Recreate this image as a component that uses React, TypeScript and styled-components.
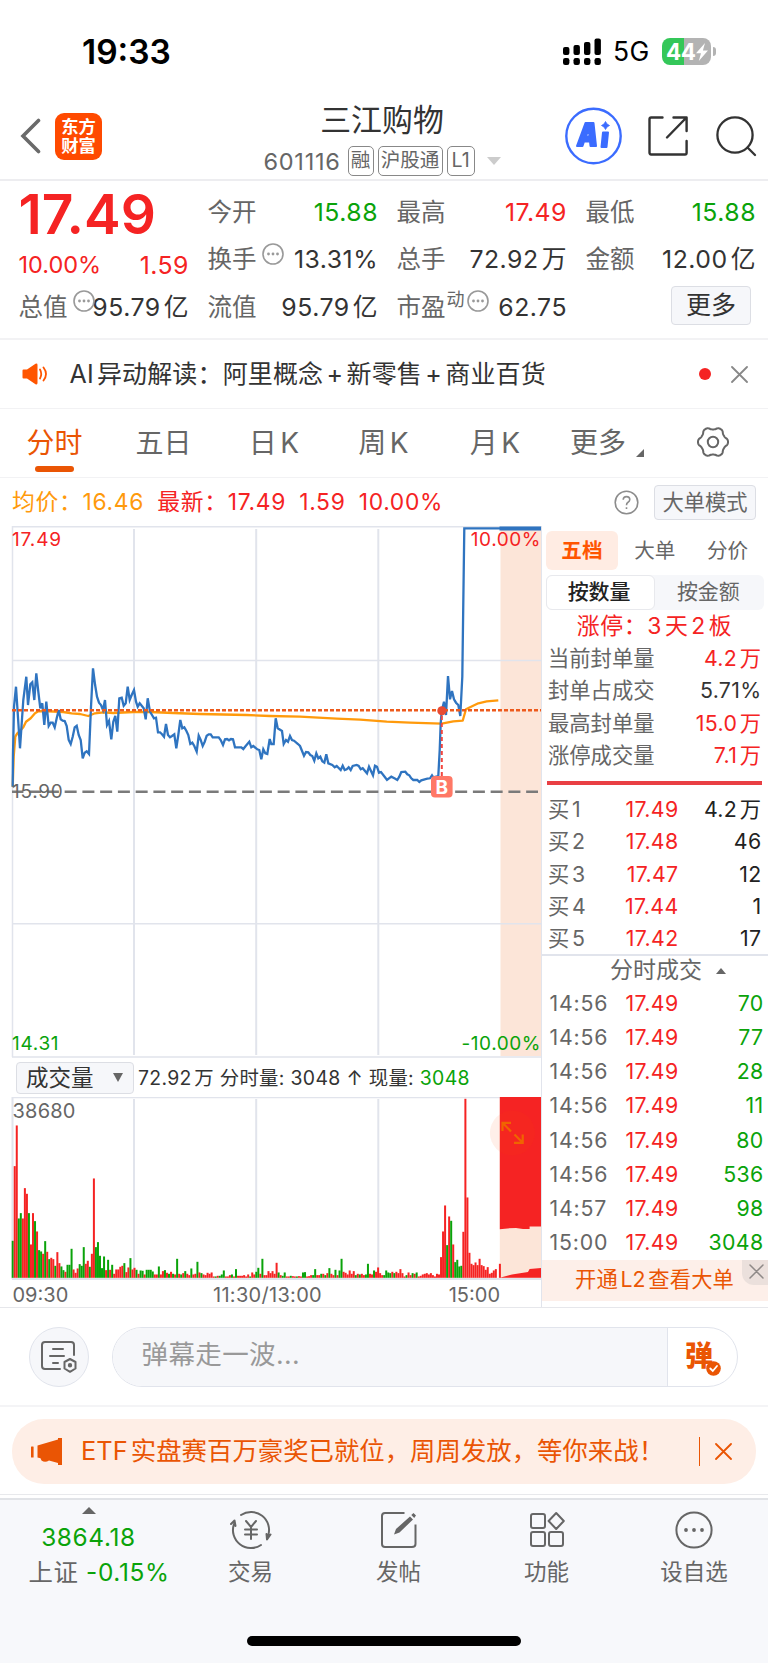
import React from 'react';
import styled, { createGlobalStyle } from 'styled-components';

const RED = '#f52323';
const GREEN = '#0aa30a';
const ORANGE = '#ea5504';
const GREY = '#666';
const DARK = '#333';
const LINE = '#e1e4ec';

const Global = createGlobalStyle`
  *, *::before, *::after { box-sizing: border-box; }
  body {
    margin: 0;
    background: #fff;
    color: ${DARK};
    font-family: Inter, 'Noto Sans CJK SC', sans-serif;
    font-weight: 400;
    text-autospace: normal;
  }
  svg { display: block; flex: none; }
`;

const Screen = styled.div`
  width: 768px;
  height: 1663px;
  display: flex;
  flex-direction: column;
  overflow: hidden;
  background: #fff;
`;

const Text = styled.span<{ $s: number; $c?: string; $w?: number; $ls?: number }>`
  font-size: ${p => p.$s}px;
  line-height: 1.2;
  color: ${p => p.$c || 'inherit'};
  font-weight: ${p => p.$w || 400};
  letter-spacing: ${p => p.$ls || 0}px;
  white-space: nowrap;
`;

/* ---------- status bar ---------- */

const StatusBar = styled.div`
  height: 93px;
  padding: 11px 57px 0 82px;
  display: flex;
  align-items: center;
  justify-content: space-between;
  color: #000;
`;
const StatusRight = styled.div`
  display: flex;
  align-items: center;
  gap: 12.5px;
`;
const Battery = styled.div`
  position: relative;
  width: 49px;
  height: 27px;
  border-radius: 8px;
  background: linear-gradient(90deg, #34c759 0 45%, #b3b3b3 45%);
  display: flex;
  align-items: center;
  padding-left: 4px;
  color: #fff;
  &::after {
    content: '';
    position: absolute;
    right: -5px;
    top: 9px;
    width: 3px;
    height: 9px;
    border-radius: 0 3px 3px 0;
    background: #b3b3b3;
  }
`;

/* ---------- header ---------- */

const Header = styled.header`
  height: 88px;
  display: grid;
  grid-template-columns: 102px 1fr 178px;
  border-bottom: 2px solid #ededf0;
  padding: 0 11px 0 20px;
`;
const HeaderLeft = styled.div`
  display: flex;
  align-items: center;
  gap: 14px;
`;
const AppLogo = styled.div`
  width: 47px;
  height: 47px;
  border-radius: 9px;
  background: #ff4a00;
  color: #fff;
  display: flex;
  align-items: center;
  justify-content: center;
  text-align: center;
  font-size: 17.3px;
  line-height: 19.5px;
  font-weight: 700;
`;
const HeaderMid = styled.div`
  display: flex;
  flex-direction: column;
  align-items: center;
  gap: 8px;
  padding: 8px 0 0 63px;
`;
const CodeRow = styled.div`
  display: flex;
  align-items: center;
  gap: 4px;
  color: ${GREY};
  svg { margin-left: 8px; }
`;
const Code = styled.span`
  font-size: 23.5px;
  line-height: 29px;
  letter-spacing: 0.75px;
  margin-right: 3px;
`;
const Tag = styled.span<{ $w: number }>`
  width: ${p => p.$w}px;
  height: 30px;
  border: 1.5px solid #888;
  border-radius: 5px;
  font-size: 19.6px;
  line-height: 27px;
  text-align: center;
  white-space: nowrap;
`;
const HeaderRight = styled.div`
  display: flex;
  align-items: center;
  justify-content: flex-end;
  gap: 26px;
  svg:last-child { margin-left: 2.5px; }
`;

/* ---------- quote ---------- */

const Quote = styled.section`
  height: 159px;
  display: grid;
  grid-template-columns: 170px 170px 170px 170px;
  grid-template-rows: 47.5px 47.5px 47.5px;
  column-gap: 19px;
  padding: 7px 0 0 18.5px;
  border-bottom: 2px solid #f2f2f4;
`;
const Cell = styled.div<{ $drop?: number }>`
  display: flex;
  align-items: center;
  justify-content: space-between;
  position: relative;
  padding-top: ${p => p.$drop || 0}px;
`;
const Label = styled.span`
  display: flex;
  align-items: center;
  color: ${GREY};
  font-size: 24.5px;
  line-height: 30px;
  white-space: nowrap;
`;
const Num = styled.span<{ $c?: string }>`
  font-size: 24.8px;
  line-height: 30px;
  letter-spacing: 0.5px;
  margin-right: -0.5px;
  color: ${p => p.$c || DARK};
  white-space: nowrap;
`;
const DotsWrap = styled.span<{ $x: number }>`
  position: absolute;
  left: ${p => p.$x}px;
  top: 7px;
`;
const Sup = styled.span`
  font-size: 18px;
  line-height: 20px;
  margin: -14px 0 0 1px;
`;
const MoreButton = styled.button`
  margin: -3px 4.5px 0 auto;
  width: 80px;
  height: 39px;
  border: 1.5px solid #dcdee4;
  border-radius: 4px;
  background: #f6f7fa;
  font: inherit;
  font-size: 25px;
  line-height: 34px;
  padding: 0;
  color: ${DARK};
`;

const AiRow = styled.div`
  height: 69px;
  display: flex;
  align-items: center;
  padding: 0 20.5px 0 22px;
  border-bottom: 1.5px solid #f2f2f4;
`;
const AiText = styled.span`
  margin-left: 21.5px;
  font-size: 25px;
  line-height: 32px;
  letter-spacing: 0.15px;
  white-space: nowrap;
`;
const Plus = styled.span`
  margin: 0 3.3px;
`;
const Spacer = styled.div`
  flex: 1;
`;
const RedDot = styled.i`
  width: 12px;
  height: 12px;
  border-radius: 50%;
  background: ${RED};
  margin-right: 20px;
`;

/* ---------- period tabs ---------- */

const Tabs = styled.nav`
  height: 69px;
  display: flex;
  border-bottom: 1.5px solid #f2f2f4;
`;
const Tab = styled.div<{ $w: number; $on?: boolean }>`
  width: ${p => p.$w}px;
  display: flex;
  flex-direction: column;
  align-items: center;
  padding-top: 15.5px;
  font-size: 28px;
  line-height: 37px;
  color: ${p => (p.$on ? ORANGE : GREY)};
  white-space: nowrap;
  &::after {
    content: '';
    width: 39px;
    height: 6px;
    margin-top: 4px;
    border-radius: 3px;
    background: ${p => (p.$on ? ORANGE : 'transparent')};
  }
`;
const TabLine = styled.span`
  display: flex;
  align-items: flex-end;
  gap: 10px;
  svg { margin-bottom: 5px; }
`;
const GearBox = styled.div`
  flex: 1;
  padding: 17px 0 0 36px;
`;

/* ---------- average line ---------- */

const InfoRow = styled.div`
  height: 48px;
  display: flex;
  align-items: center;
  padding: 0 12px 0 12px;
`;
const Figures = styled.div`
  display: flex;
  gap: 13.2px;
  font-size: 22.8px;
  line-height: 30px;
  letter-spacing: 0.7px;
  color: ${RED};
  white-space: nowrap;
`;
const Avg = styled.span`
  color: #ff9a0c;
`;
const ModeButton = styled.button`
  margin-left: 15px;
  width: 102px;
  height: 35px;
  border: 1.5px solid #dcdee4;
  border-radius: 4px;
  background: #f6f7fa;
  font: inherit;
  font-size: 21.3px;
  line-height: 30px;
  padding: 0;
  color: ${GREY};
`;

/* ---------- body ---------- */

const Body = styled.div`
  height: 782px;
  display: flex;
  border-bottom: 1.5px solid #e6e7eb;
`;
const ChartCol = styled.div`
  width: 541px;
  display: flex;
  flex-direction: column;
`;
const VolumeHead = styled.div`
  height: 39px;
  padding: 0 0 0 16px;
  display: flex;
  align-items: center;
  gap: 4px;
`;
const Select = styled.div`
  width: 118px;
  height: 32px;
  border: 1.5px solid #dcdee4;
  border-radius: 4px;
  background: #f6f7fa;
  display: flex;
  align-items: center;
  justify-content: space-between;
  padding: 0 10px 0 9px;
`;
const VolumeText = styled.div`
  font-size: 19.4px;
  line-height: 26px;
  letter-spacing: 0.33px;
  white-space: nowrap;
  em { font-style: normal; color: ${GREEN}; }
`;
const Side = styled.aside`
  flex: 1;
  border-left: 1.5px solid ${LINE};
  display: flex;
  flex-direction: column;
`;
const SideTabs = styled.div`
  display: flex;
  margin: 4.5px 4px 0 3.5px;
  height: 39px;
`;
const SideTab = styled.div<{ $on?: boolean }>`
  flex: 1;
  border-radius: 6px;
  background: ${p => (p.$on ? '#ffece3' : 'transparent')};
  color: ${p => (p.$on ? '#ff5500' : GREY)};
  font-weight: ${p => (p.$on ? 700 : 400)};
  font-size: 20.6px;
  line-height: 39px;
  text-align: center;
`;
const Segment = styled.div`
  display: flex;
  height: 35px;
  margin: 5px 4px 0 3.5px;
  background: #f6f7fa;
  border-radius: 6px;
`;
const SegItem = styled.div<{ $on?: boolean }>`
  flex: 1;
  border: 1.5px solid ${p => (p.$on ? '#e8e9ed' : 'transparent')};
  border-radius: 6px;
  background: ${p => (p.$on ? '#fff' : 'transparent')};
  color: ${p => (p.$on ? '#222' : GREY)};
  font-weight: ${p => (p.$on ? 500 : 400)};
  font-size: 21px;
  line-height: 31px;
  text-align: center;
  padding-right: 2px;
`;
const LimitTitle = styled.div`
  height: 32.3px;
  color: ${RED};
  font-size: 22.9px;
  line-height: 32px;
  letter-spacing: 0.6px;
  text-align: center;
  padding-right: 1px;
`;
const Row = styled.div<{ $h: number; $pad?: string; $first?: number }>`
  height: ${p => p.$h}px;
  display: grid;
  grid-template-columns: ${p => p.$first || 74.5}px 56px 1fr;
  align-items: center;
  padding: ${p => p.$pad || '0 6.5px 0 6px'};
  font-size: 21.3px;
  line-height: 26px;
  white-space: nowrap;
`;
const PairRow = styled(Row)`
  grid-template-columns: auto 1fr;
`;
const Name = styled.span`
  color: ${GREY};
`;
const Time = styled.span`
  color: ${GREY};
  letter-spacing: 0.8px;
`;
const Val = styled.span<{ $c: string }>`
  color: ${p => p.$c};
  text-align: right;
  letter-spacing: 0.35px;
`;
const RedBar = styled.div`
  height: 4px;
  margin: 10px 6px 8px 5px;
  background: #e93f44;
`;
const TicksTitle = styled.div`
  height: 31px;
  border-top: 2px solid ${LINE};
  display: flex;
  align-items: center;
  justify-content: center;
  gap: 14px;
  padding-left: 26px;
  color: ${GREY};
`;
const L2Banner = styled.div`
  position: relative;
  height: 41px;
  margin-top: 1px;
  background: #fdefe9;
  color: ${ORANGE};
  font-size: 21.3px;
  line-height: 39px;
  padding-left: 33px;
  letter-spacing: 0.1px;
`;
const L2Close = styled.div`
  position: absolute;
  right: 0;
  top: 0;
  width: 26px;
  height: 25px;
  border-radius: 0 0 0 12px;
  background: #ebe0dc;
  display: flex;
  align-items: center;
  justify-content: center;
  padding: 0 0 3px 3px;
`;

/* ---------- comment bar ---------- */

const CommentBar = styled.div`
  height: 99px;
  display: flex;
  align-items: center;
  gap: 23px;
  padding: 1px 30px 0 29px;
  border-bottom: 2px solid #f4f4f6;
`;
const RoundButton = styled.div`
  width: 60px;
  height: 60px;
  border: 1.5px solid ${LINE};
  border-radius: 50%;
  background: #f6f7fa;
  display: flex;
  align-items: center;
  justify-content: center;
`;
const InputPill = styled.div`
  flex: 1;
  height: 60px;
  border: 1.5px solid ${LINE};
  border-radius: 30px;
  display: flex;
  overflow: hidden;
`;
const InputText = styled.div`
  flex: 1;
  background: #f6f7fa;
  border-right: 1.5px solid ${LINE};
  padding-left: 28.5px;
  font-size: 26.5px;
  line-height: 53px;
  letter-spacing: 0.4px;
  color: #999;
`;
const DanBox = styled.div`
  position: relative;
  width: 69px;
  color: ${ORANGE};
  font-size: 28px;
  line-height: 56px;
  font-weight: 900;
  padding-left: 17px;
`;
const DanBadge = styled.span`
  position: absolute;
  left: 38px;
  top: 33px;
`;

const BannerWrap = styled.div`
  height: 88px;
  padding: 11.5px 12px 0;
  border-bottom: 1.5px solid #e8e9ec;
`;
const Banner = styled.div`
  height: 65px;
  border-radius: 32px;
  background: #feeee6;
  color: ${ORANGE};
  display: flex;
  align-items: center;
  padding: 0 24px 0 19px;
`;
const BannerText = styled.span`
  margin-left: 19px;
  font-size: 25.4px;
  line-height: 34px;
  white-space: nowrap;
`;
const BannerRule = styled.i`
  width: 1.5px;
  height: 29px;
  background: ${ORANGE};
  margin-right: 15px;
`;

/* ---------- bottom nav ---------- */

const BottomNav = styled.footer`
  flex: 1;
  margin-top: 3px;
  border-top: 2px solid #e1e3e7;
  background: #f7f8fb;
  display: flex;
  flex-direction: column;
  align-items: center;
`;
const NavRow = styled.div`
  width: 768px;
  height: 136px;
  display: grid;
  grid-template-columns: 177px 147px 149px 147px 148px;
`;
const NavItem = styled.div`
  display: flex;
  flex-direction: column;
  align-items: center;
  padding-top: 10px;
  gap: 6px;
  color: ${GREY};
  font-size: 22.5px;
  line-height: 32px;
`;
const IndexItem = styled.div`
  display: flex;
  flex-direction: column;
  align-items: center;
  padding-top: 7px;
  color: ${GREEN};
  font-size: 24.4px;
  line-height: 35px;
  letter-spacing: 0.65px;
  white-space: nowrap;
  svg { margin-bottom: 6px; }
`;
const IndexChange = styled.span`
  padding-left: 21px;
  em { font-style: normal; color: ${GREY}; }
`;
const HomeBar = styled.div`
  width: 274px;
  height: 10px;
  border-radius: 5px;
  background: #000;
`;

/* ---------- icons ---------- */

const Dots = () => (
  <svg width="22" height="22" viewBox="0 0 22 22">
    <circle cx="11" cy="11" r="10" fill="none" stroke="#999" strokeWidth="1.6" />
    {[6.5, 11, 15.5].map(x => <circle key={x} cx={x} cy="11" r="1.4" fill="#999" />)}
  </svg>
);

const Cross = ({ s, c, w = 1.8 }: { s: number; c: string; w?: number }) => (
  <svg width={s} height={s} viewBox={`0 0 ${s} ${s}`} stroke={c} strokeWidth={w} strokeLinecap="round">
    <path d={`M1 1L${s - 1} ${s - 1}M${s - 1} 1L1 ${s - 1}`} />
  </svg>
);

const Triangle = ({ d, w, h, c = GREY }: { d: string; w: number; h: number; c?: string }) => (
  <svg width={w} height={h} viewBox={`0 0 ${w} ${h}`}><path d={d} fill={c} /></svg>
);

/* Six-lobed outline of the settings gear. */
const gearPath = (() => {
  const pts: string[] = [];
  for (let i = 0; i <= 180; i++) {
    const a = (i / 180) * Math.PI * 2;
    const r = 13.8 + 1.4 * Math.tanh(Math.cos(a * 6) * 1.3);
    pts.push(`${(16 + r * Math.cos(a)).toFixed(2)} ${(16 + r * Math.sin(a)).toFixed(2)}`);
  }
  return `M${pts.join('L')}Z`;
})();

/* ---------- price chart ---------- */

const near = (s: string, ox: number, oy: number) =>
  s.trim().split(/\s+/).map(p => {
    const [x, y] = p.split(',').map(Number);
    return `${(ox + x / 3).toFixed(1)},${(oy + y / 3).toFixed(1)}`;
  }).join(' ');

const priceMorning = near(`38,440 39,340 42,200 48,140 60,325 70,180 79,110 84,195 91,133 97,127 103,180 109,100 115,155 121,205
127,190 133,255 139,185 146,258 152,248 158,248 164,262 170,235 176,210 182,238 188,242 194,243 200,258 206,300 212,312 218,290
224,262 230,257 236,285 242,300 248,355 254,338 260,334 267,342 273,200 279,85 285,133 291,170 297,188 303,195 309,210 315,180
321,255 327,243 334,298 340,245 346,228 352,275 358,175 365,173 371,197 377,190 383,140 389,180 395,165 402,150 408,185 413,200
419,190 425,197 431,205 437,238 443,175 450,215 456,225 462,235 468,233 474,277 480,277 486,283 492,290 498,252 504,285 510,292
516,288 523,283 529,325 535,285 541,240 547,265 553,262 559,272 565,285 571,312 577,308 583,318 590,335 596,287 602,300 608,318
614,305 620,287 626,283 632,283 638,292 656,292 662,300 669,315 675,298 681,297 687,301 693,297 699,298 705,322 724,322 730,327
737,318 748,305 754,322 760,318 772,328 778,330 784,358 790,328 796,340 802,342 809,297 814,312 821,312`, 0, 640);

const priceAfternoon = near(`17,595 23,625 36,633 41,672 48,660 54,665 60,648 66,660 72,662 84,672 90,678 102,707 108,696
115,697 121,705 127,708 133,722 139,700 145,715 151,710 157,724 163,728 169,703 175,730 187,735 194,742 200,738 212,750 218,737
224,750 230,748 236,742 242,750 248,738 260,735 266,738 272,748 278,745 291,760 297,740 309,766 315,737 321,740 327,758 333,756
345,772 351,780 364,770 376,776 382,780 388,770 394,756 406,755 412,763 418,766 424,775 430,780 442,780 448,786 454,781 464,778
472,776 480,775 486,766 490,772 505,768 509,690 512,610 515,573 522,545 528,585 534,468 540,538 546,513 552,538 558,548 565,555
571,588 577,470 583,25 690,25`, 270, 520);

const avgLine = `${near(`38,440 41,350 46,290 52,280 60,273 70,262 78,245 92,235 105,220 115,214 130,213 190,216 215,220
240,222 265,228 285,220 310,217 340,219 400,216 450,216 520,219 600,222 740,225`, 0, 640)} ${near(`0,588 90,590 200,596
270,599 350,605 420,608 515,611 550,604 578,602 588,568 600,562 625,550 650,544 685,541`, 270, 520)}`;

const PriceChart = () => (
  <svg width="541" height="532" viewBox="0 526 541 532" fontFamily="Inter, sans-serif" fontSize="19" letterSpacing="0.7">
    <rect x="500.5" y="528" width="41" height="528" fill="#fce5d8" />
    <g stroke={LINE} strokeWidth="2">
      <path d="M12 526.8H541M12.5 526V1057M12 1057H541" fill="none" strokeWidth="1.5" />
      <path d="M134 529V1055M256.2 529V1055M378.3 529V1055" />
      <path d="M12 660.5H541M12 923.8H541" strokeWidth="1.5" />
    </g>
    <path d="M12 791.8H538" stroke="#7a7a7a" strokeWidth="2.6" strokeDasharray="12 5.75" strokeDashoffset="0.6" />
    <polyline points={avgLine} fill="none" stroke="#ff9a0c" strokeWidth="2.3" strokeLinejoin="round" />
    <polyline points={`${priceMorning} ${priceAfternoon}`} fill="none" stroke="#2f74c0" strokeWidth="2.3" />
    <path d="M499.5 528.4H541" stroke="#2f74c0" strokeWidth="4" />
    <path d="M12 710.2H541" stroke="#ed5a1c" strokeWidth="2.4" strokeDasharray="4 2" />
    <path d="M441.8 716V777" stroke="#f2473f" strokeWidth="2" strokeDasharray="4 3" />
    <circle cx="441.9" cy="710.8" r="4.6" fill="#e84a33" />
    <rect x="431" y="776" width="21.6" height="21.4" rx="4" fill="#ff7866" />
    <text x="442.2" y="793.5" fontSize="19" fontWeight="700" fill="#fff" textAnchor="middle">B</text>
    <text x="12" y="545.5" fill={RED} letterSpacing="0.85">17.49</text>
    <text x="541" y="545.5" fill={RED} textAnchor="end" letterSpacing="0.55">10.00%</text>
    <text x="12" y="798" fill={GREY}>15.90</text>
    <text x="12" y="1050" fill={GREEN}>14.31</text>
    <text x="541" y="1050" fill={GREEN} textAnchor="end" letterSpacing="0.55">-10.00%</text>
  </svg>
);

/* Volume per minute: positive bars are rising, negative bars falling. */
const volumes = `-111 335 457 -178 -194 178 269 252 -194 100 194 -170 139 -83 -79 72 -110 78 -56 60 56 -36 77 44 -34 -23 18 -39
-39 -87 25 15 28 -41 -36 -92 42 51 -33 72 298 -92 -107 -66 -29 -64 23 -54 24 -39 12 25 25 33 36 -44 17 31 -59 25 30 -24 12 -22
-21 10 -24 -24 -24 -19 10 10 -34 10 20 -23 15 -12 18 -12 10 -57 12 -10 14 -20 12 8 -28 10 12 -48 16 -14 10 8 15 12 16 4 -4 6 -6
-10 -22 4 4 8 -10 4 -26 6 6 6 8 4 10 -4 16 10 -18 -30 12 -57 8 8 20 14 20 12 45 -16 8 -6 -16 4 4 -6 5 4 -4 5 4 -16 -17 4 5 8 -8
-26 8 8 -12 12 -8 14 -29 12 8 -24 8 -22 -57 18 15 10 22 12 20 -8 12 -10 12 8 -10 -42 12 10 -22 18 31 14 8 -8 -22 -16 -14 18 -14
18 14 26 14 4 -8 16 8 -14 12 -16 4 6 10 12 14 10 14 8 4 12 10 62 139 217 -98 184 -171 100 -47 -54 -34 -36 138 537 241 75 42 38
46 38 57 38 35 24 32 12 15 22 26 0 42`.trim().split(/\s+/).map(Number);

const VolumeChart = () => (
  <svg width="541" height="209" viewBox="0 1097 541 209" fontFamily="Inter, sans-serif" fontSize="20" fill={GREY}>
    <g stroke={LINE} strokeWidth="2">
      <path d="M12 1097.2H541M12.5 1096V1279M12 1279H541" strokeWidth="2" />
      <path d="M134 1099V1278M256.2 1099V1278M378.3 1099V1278" />
    </g>
    <rect x="499.8" y="1097" width="41.5" height="181" fill="#fce5d8" />
    <path d="M499.8 1096.5H541V1226.4H529.6V1229H523L516 1228Q508 1228 499.8 1229.3Z" fill={RED} />
    <path d="M499.8 1277.7L512 1274.5L528 1272L529.6 1269L541 1268V1277.7Z" fill={RED} />
    {volumes.map((v, i) => (
      <rect key={i} x={11.7 + i * 2.03} y={1277.8 - Math.abs(v) / 3} width="2" height={Math.abs(v) / 3} fill={v < 0 ? GREEN : RED} />
    ))}
    <circle cx="512.4" cy="1133" r="22.5" fill="#ff4a10" fillOpacity="0.09" />
    <g fill="none" stroke="#f06400" strokeWidth="2.2">
      <path d="M502.5 1131V1122.8H511M503 1123.3L511 1131.5" />
      <path d="M522.7 1134.5V1142.8H514M522 1142L514.5 1134.5" />
    </g>
    <text x="12.5" y="1118" letterSpacing="0.2">38680</text>
    <text x="12.5" y="1302">09:30</text>
    <text x="267.5" y="1302" letterSpacing="0.3" textAnchor="middle">11:30/13:00</text>
    <text x="500" y="1302" textAnchor="end">15:00</text>
  </svg>
);

/* ---------- data ---------- */

const limits: [string, string, string][] = [
  ['当前封单量', '4.2万', RED],
  ['封单占成交', '5.71%', DARK],
  ['最高封单量', '15.0万', RED],
  ['涨停成交量', '7.1万', RED],
];
const bids = [['买1', '17.49', '4.2万'], ['买2', '17.48', '46'], ['买3', '17.47', '12'], ['买4', '17.44', '1'], ['买5', '17.42', '17']];
const ticks = [['14:56', '70'], ['14:56', '77'], ['14:56', '28'], ['14:56', '11'], ['14:56', '80'], ['14:56', '536'], ['14:57', '98'], ['15:00', '3048']];

export default function App() {
  return (
    <>
      <Global />
      <Screen>
        <StatusBar>
          <Text $s={33.5} $w={600}>19:33</Text>
          <StatusRight>
            <svg width="38" height="28" viewBox="0 0 38 28">
              {[9, 7, 4, 0.5].map((y, i) => (
                <g key={i}>
                  <rect x={i * 10.5} y={y} width="6.4" height={17 - y} rx="2" />
                  <rect x={i * 10.5} y="20" width="6.4" height="7" rx="2.2" />
                </g>
              ))}
            </svg>
            <Text $s={26.5} $ls={0.3}>5G</Text>
            <Battery>
              <Text $s={22.5} $w={700} $ls={-0.4}>44</Text>
              <svg width="12" height="18" viewBox="0 0 12 18"><path d="M9 0L0 10.3H5L2.8 18L12 7.4H6.9Z" fill="#fff" /></svg>
            </Battery>
          </StatusRight>
        </StatusBar>

        <Header>
          <HeaderLeft>
            <svg width="21" height="36" viewBox="0 0 21 36">
              <path d="M18.5 2.5L3 18L18.5 33.5" fill="none" stroke="#6a6a6a" strokeWidth="3.6" strokeLinecap="round" />
            </svg>
            <AppLogo>东方<br />财富</AppLogo>
          </HeaderLeft>
          <HeaderMid>
            <Text $s={30.9}>三江购物</Text>
            <CodeRow>
              <Code>601116</Code>
              <Tag $w={26}>融</Tag>
              <Tag $w={65}>沪股通</Tag>
              <Tag $w={28}>L1</Tag>
              <Triangle w={14} h={8} d="M0 0H14L7 8Z" c="#ccc" />
            </CodeRow>
          </HeaderMid>
          <HeaderRight>
            <svg width="57" height="58" viewBox="0 0 57 58">
              <circle cx="28.5" cy="29" r="27.2" fill="none" stroke="#3b6cff" strokeWidth="2.4" />
              <g fill="#3b6cff" stroke="#3b6cff" strokeLinejoin="round">
                <path fillRule="evenodd" strokeWidth="2" d="M12 39L20.5 16H28.5L31 39H25.5L25 34.5H19L17.5 39ZM20.5 29.5H24.5L24 23Z" />
                <path strokeWidth="2" d="M38 25.5H43L41.5 40H36.5Z" />
                <path strokeWidth="0.8" d="M40.5 14.5L42 17L44.5 18.5L42 20L40.5 22.5L39 20L36.5 18.5L39 17Z" />
              </g>
            </svg>
            <svg width="40" height="40" viewBox="0 0 40 40" fill="none" stroke="#333" strokeWidth="2.4" strokeLinecap="round" strokeLinejoin="round">
              <path d="M14.5 1.5H3.2Q1.5 1.5 1.5 3.2V36.6Q1.5 38.5 3.2 38.5H37Q38.6 38.5 38.6 36.8V25" />
              <path d="M25.5 1.5H38.6V15M38 2L19 21.5" />
            </svg>
            <svg width="41" height="41" viewBox="0 0 41 41" fill="none" stroke="#333" strokeWidth="2.3" strokeLinecap="round">
              <circle cx="19" cy="19" r="17.6" />
              <path d="M31.5 31.5L39 39" />
            </svg>
          </HeaderRight>
        </Header>

        <Quote>
          <Cell $drop={5}><Text $s={55} $w={600} $c={RED}>17.49</Text></Cell>
          <Cell><Label>今开</Label><Num $c={GREEN}>15.88</Num></Cell>
          <Cell><Label>最高</Label><Num $c={RED}>17.49</Num></Cell>
          <Cell><Label>最低</Label><Num $c={GREEN}>15.88</Num></Cell>

          <Cell $drop={12}><Text $s={23.5} $c={RED}>10.00%</Text><Num $c={RED}>1.59</Num></Cell>
          <Cell><Label>换手</Label><DotsWrap $x={54.5}><Dots /></DotsWrap><Num>13.31%</Num></Cell>
          <Cell><Label>总手</Label><Num>72.92万</Num></Cell>
          <Cell><Label>金额</Label><Num>12.00亿</Num></Cell>

          <Cell><Label>总值</Label><DotsWrap $x={54.5}><Dots /></DotsWrap><Num>95.79亿</Num></Cell>
          <Cell><Label>流值</Label><Num>95.79亿</Num></Cell>
          <Cell><Label>市盈<Sup>动</Sup></Label><DotsWrap $x={70}><Dots /></DotsWrap><Num>62.75</Num></Cell>
          <Cell><MoreButton>更多</MoreButton></Cell>
        </Quote>

        <AiRow>
          <svg width="26" height="22" viewBox="0 0 26 22">
            <path d="M0.5 7.5Q0.5 6.5 1.5 6.5H5L13.5 0.8Q15.5 0 15.5 2V20Q15.5 22 13.5 21.2L5 15.5H1.5Q0.5 15.5 0.5 14.5Z" fill="#ff5500" />
            <path d="M18 6.5Q20.5 11 18 15.5M21.5 4.5Q26.5 11 21.5 17.5" fill="none" stroke="#ff5500" strokeWidth="1.8" strokeLinecap="round" />
          </svg>
          <AiText>AI异动解读：阿里概念<Plus>+</Plus>新零售<Plus>+</Plus>商业百货</AiText>
          <Spacer />
          <RedDot />
          <Cross s={17} c="#888" />
        </AiRow>

        <Tabs>
          <Tab $w={109} $on>分时</Tab>
          <Tab $w={109}>五日</Tab>
          <Tab $w={112}>日K</Tab>
          <Tab $w={107}>周K</Tab>
          <Tab $w={116}>月K</Tab>
          <Tab $w={108}><TabLine>更多<Triangle w={8} h={8} d="M8 0V8H0Z" /></TabLine></Tab>
          <GearBox>
            <svg width="32" height="32" viewBox="0 0 32 32" fill="none" stroke={GREY} strokeWidth="2">
              <path d={gearPath} />
              <circle cx="16" cy="16" r="5.2" />
            </svg>
          </GearBox>
        </Tabs>

        <InfoRow>
          <Figures>
            <Avg>均价：16.46</Avg>
            <span>最新：17.49</span>
            <span>1.59</span>
            <span>10.00%</span>
          </Figures>
          <Spacer />
          <svg width="25" height="25" viewBox="0 0 25 25" fill="none" stroke="#8c8c8c" strokeWidth="1.6">
            <circle cx="12.5" cy="12.5" r="11.3" />
            <path d="M9.2 9.8Q9.3 6.6 12.5 6.6Q15.8 6.6 15.8 9.6Q15.8 11.3 13.8 12.5Q12.5 13.3 12.5 15.2M12.5 17.2V19" />
          </svg>
          <ModeButton>大单模式</ModeButton>
        </InfoRow>

        <Body>
          <ChartCol>
            <PriceChart />
            <VolumeHead>
              <Select>
                <Text $s={22.5}>成交量</Text>
                <Triangle w={10} h={9} d="M0 0H10L5 9Z" />
              </Select>
              <VolumeText>72.92万 分时量: 3048 ↑ 现量: <em>3048</em></VolumeText>
            </VolumeHead>
            <VolumeChart />
          </ChartCol>

          <Side>
            <SideTabs>
              <SideTab $on>五档</SideTab>
              <SideTab>大单</SideTab>
              <SideTab>分价</SideTab>
            </SideTabs>
            <Segment>
              <SegItem $on>按数量</SegItem>
              <SegItem>按金额</SegItem>
            </Segment>
            <LimitTitle>涨停：3天2板</LimitTitle>
            {limits.map(([k, v, c]) => (
              <PairRow key={k} $h={32.3}>
                <Name>{k}</Name>
                <Val $c={c}>{v}</Val>
              </PairRow>
            ))}
            <RedBar />
            {bids.map(([k, p, q]) => (
              <Row key={k} $h={32.3}>
                <Name>{k}</Name>
                <Val $c={RED}>{p}</Val>
                <Val $c="#222">{q}</Val>
              </Row>
            ))}
            <TicksTitle>
              <Text $s={23}>分时成交</Text>
              <Triangle w={10} h={6} d="M5 0L10 6H0Z" />
            </TicksTitle>
            {ticks.map(([t, q], i) => (
              <Row key={i} $h={34.25} $pad="0 4.5px 0 7.5px" $first={73}>
                <Time>{t}</Time>
                <Val $c={RED}>17.49</Val>
                <Val $c={GREEN}>{q}</Val>
              </Row>
            ))}
            <L2Banner>
              开通L2查看大单
              <L2Close><Cross s={15} c="#8f8a88" w={1.5} /></L2Close>
            </L2Banner>
          </Side>
        </Body>

        <CommentBar>
          <RoundButton>
            <svg width="38" height="34" viewBox="0 0 38 34" fill="none" stroke={GREY} strokeWidth="2" strokeLinecap="round">
              <path d="M20 29H5Q2 29 2 26V5Q2 2 5 2H31Q34 2 34 5V15" />
              <path d="M13 9H23M10 16H24M13 23H18" />
              <path d="M30 19L35.5 22V28.5L30 31.8L24.5 28.5V22Z" strokeLinejoin="round" />
              <circle cx="30" cy="25.3" r="1.2" fill={GREY} />
            </svg>
          </RoundButton>
          <InputPill>
            <InputText>弹幕走一波...</InputText>
            <DanBox>
              弹
              <DanBadge>
                <svg width="15" height="15" viewBox="0 0 15 15">
                  <circle cx="7.5" cy="7.5" r="7.3" fill={ORANGE} />
                  <path d="M4.3 7.5L6.8 10L11 5" fill="none" stroke="#fff" strokeWidth="1.8" strokeLinecap="round" />
                </svg>
              </DanBadge>
            </DanBox>
          </InputPill>
        </CommentBar>

        <BannerWrap>
          <Banner>
            <svg width="31" height="27" viewBox="0 0 31 27" fill={ORANGE}>
              <rect x="0" y="8.5" width="2.6" height="11" rx="0.5" />
              <path d="M6.5 7.5L27 1.5V0H31V27H27V25L18 22.5Q14 25 10.5 22.5L9.5 20.3L6.5 19.5Z" />
            </svg>
            <BannerText>ETF实盘赛百万豪奖已就位，周周发放，等你来战！</BannerText>
            <Spacer />
            <BannerRule />
            <Cross s={17} c={ORANGE} />
          </Banner>
        </BannerWrap>

        <BottomNav>
          <NavRow>
            <IndexItem>
              <Triangle w={14} h={7} d="M7 0L14 7H0Z" />
              <span>3864.18</span>
              <IndexChange><em>上证</em> -0.15%</IndexChange>
            </IndexItem>
            <NavItem>
              <svg width="44" height="40" viewBox="0 0 44 40" fill="none" stroke={GREY} strokeWidth="2" strokeLinecap="round" strokeLinejoin="round">
                <path d="M12 5A18 18 0 0 1 39 26M41.5 24.5L38 29.5L37.5 24M32 35A18 18 0 0 1 5 14M2 14L5.5 10.5L6.5 16" />
                <path d="M17 11L22 17L27 11M22 17V29M16 19.5H28M16 24.5H28" />
              </svg>
              <span>交易</span>
            </NavItem>
            <NavItem>
              <svg width="40" height="40" viewBox="0 0 40 40" fill="none" stroke={GREY} strokeWidth="2">
                <path d="M25.5 3H6Q3 3 3 6V34Q3 37 6 37H33Q36.5 37 36.5 34V14.5" />
                <path d="M15 24.5L17 19L31 6.5L34 9.5L20.5 22.5ZM32.3 5L34.5 3L37 5.5L35.2 8Z" fill={GREY} stroke="none" />
              </svg>
              <span>发帖</span>
            </NavItem>
            <NavItem>
              <svg width="36" height="40" viewBox="0 0 36 40" fill="none" stroke={GREY} strokeWidth="2">
                <rect x="2" y="4" width="14" height="14" rx="2" />
                <rect x="2" y="22" width="14" height="14" rx="2" />
                <rect x="20" y="22" width="14" height="14" rx="2" />
                <path d="M27.2 3L34.8 11L27.2 19L19.6 11Z" strokeLinejoin="round" />
              </svg>
              <span>功能</span>
            </NavItem>
            <NavItem>
              <svg width="40" height="40" viewBox="0 0 40 40" fill="none" stroke={GREY} strokeWidth="2">
                <circle cx="20" cy="20" r="17.6" />
                {[12, 20, 28].map(x => <circle key={x} cx={x} cy="20" r="1.9" fill={GREY} stroke="none" />)}
              </svg>
              <span>设自选</span>
            </NavItem>
          </NavRow>
          <HomeBar />
        </BottomNav>
      </Screen>
    </>
  );
}
